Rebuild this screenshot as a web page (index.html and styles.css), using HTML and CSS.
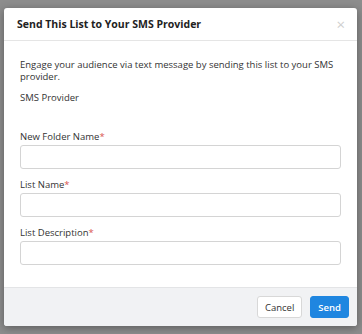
FILE: index.html
```html
<!DOCTYPE html>
<html lang="en">
<head>
    <meta charset="UTF-8">
    <meta name="viewport" content="width=device-width, initial-scale=1.0">
    <title>Send to SMS Provider</title>
    <link rel="stylesheet" href="styles.css">
</head>
<body>
    <div class="backdrop">
        <div class="modal">
            <div class="modal-header">
                <h2>Send This List to Your SMS Provider</h2>
                <span class="close">&times;</span>
            </div>
            <div class="modal-body">
                <p class="intro">Engage your audience via text message by sending this list to your SMS provider.</p>
                <p class="provider">SMS Provider</p>
                <div class="field">
                    <label>New Folder Name<span class="req">*</span></label>
                    <input type="text">
                </div>
                <div class="field">
                    <label>List Name<span class="req">*</span></label>
                    <input type="text">
                </div>
                <div class="field">
                    <label>List Description<span class="req">*</span></label>
                    <input type="text">
                </div>
            </div>
            <div class="modal-footer">
                <button class="btn btn-cancel">Cancel</button>
                <button class="btn btn-send">Send</button>
            </div>
        </div>
    </div>
</body>
</html>
```

FILE: styles.css
```css
html, body {
    margin: 0;
    height: 100%;
}
body {
    font-family: "Open Sans", "Noto Sans", Arial, sans-serif;
    background-color: #8d8d8d;
    color: #333;
}
.backdrop {
    height: 100%;
    padding: 8px 5px 8px 4px;
    box-sizing: border-box;
}
.modal {
    height: 100%;
    background-color: #fff;
    border-radius: 3px;
    box-shadow: 0 2px 8px rgba(0, 0, 0, 0.35);
    display: flex;
    flex-direction: column;
    overflow: hidden;
}
.modal-header {
    height: 32px;
    display: flex;
    align-items: center;
    justify-content: space-between;
    padding: 0 12px 0 13px;
    border-bottom: 1px solid #e5e5e5;
}
.modal-header h2 {
    margin: 0;
    font-size: 10.5px;
    font-weight: 700;
    color: #222;
}
.close {
    font-size: 15px;
    color: #cfcfcf;
    line-height: 1;
}
.modal-body {
    flex: 1;
    padding: 18px 16px 0 16px;
    font-size: 9.5px;
}
.intro {
    margin: 0;
    line-height: 12px;
}
.provider {
    margin: 9px 0 0 0;
    line-height: 12px;
}
.field {
    margin-top: 27px;
}
.field + .field {
    margin-top: 10px;
}
.field label {
    display: block;
    line-height: 12px;
    margin-bottom: 2px;
}
.req {
    color: #d9534f;
}
.field input {
    display: block;
    width: 100%;
    height: 24px;
    box-sizing: border-box;
    border: 1px solid #d4d4d4;
    border-radius: 3px;
    outline: none;
}
.modal-footer {
    height: 39px;
    box-sizing: border-box;
    background-color: #f1f2f4;
    border-top: 1px solid #e3e4e6;
    display: flex;
    justify-content: flex-end;
    align-items: center;
    gap: 8px;
    padding: 0 8px;
}
.btn {
    height: 22px;
    padding: 0 7px;
    font-family: inherit;
    font-size: 9.5px;
    border-radius: 3px;
    cursor: pointer;
}
.btn-cancel {
    background-color: #fff;
    border: 1px solid #d8d8d8;
    color: #333;
}
.btn-send {
    background-color: #1f86e0;
    border: 1px solid #1f86e0;
    color: #fff;
    font-weight: 600;
}
```
